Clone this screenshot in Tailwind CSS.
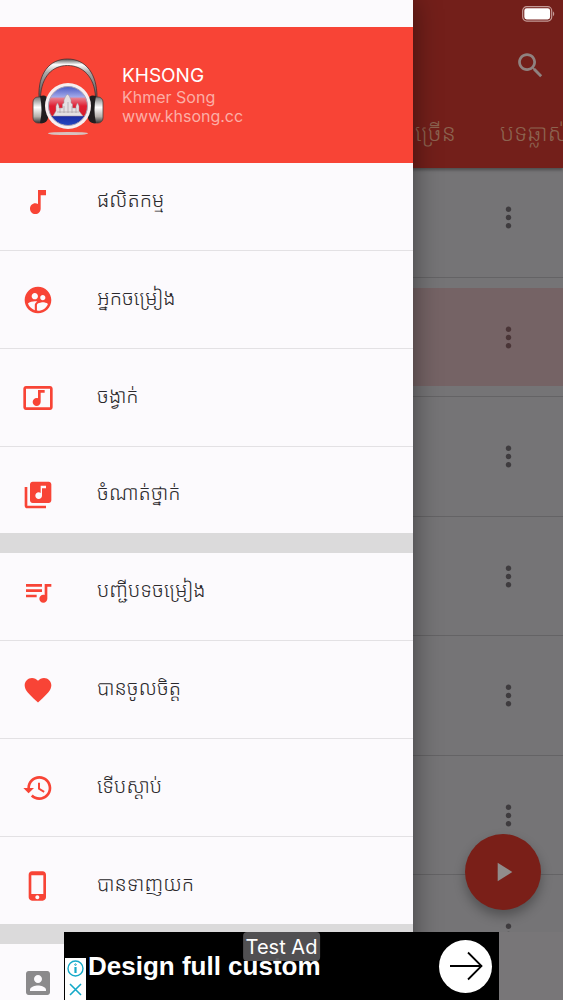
<!DOCTYPE html>
<html lang="km">
<head>
<meta charset="utf-8">
<meta name="viewport" content="width=device-width, initial-scale=1">
<title>KHSONG</title>
<script src="https://cdn.jsdelivr.net/npm/@tailwindcss/browser@4"></script>
</head>
<body class="font-['Inter','Noto_Sans_Khmer','Noto_Sans',sans-serif]">
<div class="relative h-screen overflow-hidden bg-[#757476]">

  <!-- Song list screen, dimmed by the open drawer -->
  <main class="flex h-full flex-col">
    <header class="flex h-[168px] shrink-0 flex-col bg-[#731f1a] shadow-[0_2px_3px_rgba(0,0,0,0.35)]">
      <div class="flex h-7 items-center justify-end pr-2">
        <svg class="h-4 w-[33px]" viewBox="0 0 33 16" aria-label="Battery full">
          <rect x="0.7" y="0.7" width="29" height="14.4" rx="4" fill="none" stroke="#c49a97" stroke-width="1.2"/>
          <rect x="2.3" y="2.3" width="25.8" height="11.2" rx="2.4" fill="#fff"/>
          <path d="M31 5.6c1.6.6 1.6 4 0 4.6z" fill="#c49a97"/>
        </svg>
      </div>
      <div class="flex h-[74px] items-center justify-end pr-4">
        <button aria-label="Search" class="text-[#8f8280]">
          <svg class="size-[33px]" viewBox="0 0 24 24" fill="currentColor"><path d="M15.5 14h-.79l-.28-.27C15.41 12.59 16 11.11 16 9.5 16 5.91 13.09 3 9.5 3S3 5.91 3 9.5 5.91 16 9.5 16c1.61 0 3.09-.59 4.23-1.57l.27.28v.79l5 4.99L20.49 19l-4.99-5zm-6 0C7.01 14 5 11.99 5 9.5S7.01 5 9.5 5 14 7.01 14 9.5 11.99 14 9.5 14z"/></svg>
        </button>
      </div>
      <nav class="flex flex-1 items-center gap-11 overflow-hidden pb-1 pl-[415px] text-[23px] leading-8 font-light whitespace-nowrap text-[#8c6350]">
        <a href="#" class="shrink-0">ច្រើន</a>
        <a href="#" class="shrink-0">បទឆ្លាស់</a>
      </nav>
    </header>

    <ul class="flex-1 overflow-hidden text-[#3f3c3f]">
      <li class="flex h-[98px] items-center justify-end pr-[38px]"><button aria-label="More"><svg class="size-[33px]" viewBox="0 0 24 24" fill="currentColor"><path d="M12 8c1.1 0 2-.9 2-2s-.9-2-2-2-2 .9-2 2 .9 2 2 2zm0 2c-1.1 0-2 .9-2 2s.9 2 2 2 2-.9 2-2-.9-2-2-2zm0 6c-1.1 0-2 .9-2 2s.9 2 2 2 2-.9 2-2-.9-2-2-2z"/></svg></button></li>
      <li class="flex h-[22px] items-center" role="separator"><span class="h-px flex-1 bg-[#646365]"></span></li>
      <li class="flex h-[98px] items-center justify-end bg-[#756365] pr-[38px] text-[#4a3537]"><button aria-label="More"><svg class="size-[33px]" viewBox="0 0 24 24" fill="currentColor"><path d="M12 8c1.1 0 2-.9 2-2s-.9-2-2-2-2 .9-2 2 .9 2 2 2zm0 2c-1.1 0-2 .9-2 2s.9 2 2 2 2-.9 2-2-.9-2-2-2zm0 6c-1.1 0-2 .9-2 2s.9 2 2 2 2-.9 2-2-.9-2-2-2z"/></svg></button></li>
      <li class="flex h-[21px] items-center" role="separator"><span class="h-px flex-1 bg-[#646365]"></span></li>
      <li class="flex h-[98px] items-center justify-end pr-[38px]"><button aria-label="More"><svg class="size-[33px]" viewBox="0 0 24 24" fill="currentColor"><path d="M12 8c1.1 0 2-.9 2-2s-.9-2-2-2-2 .9-2 2 .9 2 2 2zm0 2c-1.1 0-2 .9-2 2s.9 2 2 2 2-.9 2-2-.9-2-2-2zm0 6c-1.1 0-2 .9-2 2s.9 2 2 2 2-.9 2-2-.9-2-2-2z"/></svg></button></li>
      <li class="flex h-[22px] items-center" role="separator"><span class="h-px flex-1 bg-[#646365]"></span></li>
      <li class="flex h-[98px] items-center justify-end pr-[38px]"><button aria-label="More"><svg class="size-[33px]" viewBox="0 0 24 24" fill="currentColor"><path d="M12 8c1.1 0 2-.9 2-2s-.9-2-2-2-2 .9-2 2 .9 2 2 2zm0 2c-1.1 0-2 .9-2 2s.9 2 2 2 2-.9 2-2-.9-2-2-2zm0 6c-1.1 0-2 .9-2 2s.9 2 2 2 2-.9 2-2-.9-2-2-2z"/></svg></button></li>
      <li class="flex h-[21px] items-center" role="separator"><span class="h-px flex-1 bg-[#646365]"></span></li>
      <li class="flex h-[98px] items-center justify-end pr-[38px]"><button aria-label="More"><svg class="size-[33px]" viewBox="0 0 24 24" fill="currentColor"><path d="M12 8c1.1 0 2-.9 2-2s-.9-2-2-2-2 .9-2 2 .9 2 2 2zm0 2c-1.1 0-2 .9-2 2s.9 2 2 2 2-.9 2-2-.9-2-2-2zm0 6c-1.1 0-2 .9-2 2s.9 2 2 2 2-.9 2-2-.9-2-2-2z"/></svg></button></li>
      <li class="flex h-[22px] items-center" role="separator"><span class="h-px flex-1 bg-[#646365]"></span></li>
      <li class="flex h-[98px] items-center justify-end pr-[38px]"><button aria-label="More"><svg class="size-[33px]" viewBox="0 0 24 24" fill="currentColor"><path d="M12 8c1.1 0 2-.9 2-2s-.9-2-2-2-2 .9-2 2 .9 2 2 2zm0 2c-1.1 0-2 .9-2 2s.9 2 2 2 2-.9 2-2-.9-2-2-2zm0 6c-1.1 0-2 .9-2 2s.9 2 2 2 2-.9 2-2-.9-2-2-2z"/></svg></button></li>
      <li class="flex h-[21px] items-center" role="separator"><span class="h-px flex-1 bg-[#646365]"></span></li>
      <li class="flex h-[98px] items-center justify-end pr-[38px]"><button aria-label="More"><svg class="size-[33px]" viewBox="0 0 24 24" fill="currentColor"><path d="M12 8c1.1 0 2-.9 2-2s-.9-2-2-2-2 .9-2 2 .9 2 2 2zm0 2c-1.1 0-2 .9-2 2s.9 2 2 2 2-.9 2-2-.9-2-2-2zm0 6c-1.1 0-2 .9-2 2s.9 2 2 2 2-.9 2-2-.9-2-2-2z"/></svg></button></li>
    </ul>
    <div class="h-[68px] shrink-0 bg-[#787678]"></div>
  </main>

  <button aria-label="Play" class="absolute right-[22px] bottom-[90px] flex size-[76px] items-center justify-center rounded-full bg-[#7a1f18] text-[#918c8b] shadow-[0_6px_12px_rgba(0,0,0,0.3)]">
    <svg class="size-8" viewBox="0 0 24 24" fill="currentColor"><path d="M8 5v14l11-7z"/></svg>
  </button>

  <!-- Navigation drawer -->
  <aside class="absolute inset-y-0 left-0 w-[413px] max-w-[85%] overflow-hidden bg-[#fcfafd] pt-[27px] shadow-[0_0_26px_rgba(0,0,0,0.45)]">
    <div class="flex h-[136px] items-center gap-[18px] bg-[#f84436] pl-[30px]">
      <svg class="mt-1 h-20 w-[74px] shrink-0" viewBox="0 0 74 80" aria-label="KHSONG logo">
        <defs>
          <linearGradient id="band" x1="0" y1="0" x2="0" y2="1"><stop offset="0" stop-color="#555"/><stop offset=".15" stop-color="#fff"/><stop offset=".35" stop-color="#aaa"/><stop offset="1" stop-color="#555"/></linearGradient>
          <linearGradient id="cup" x1="0" y1="0" x2="0" y2="1"><stop offset="0" stop-color="#777"/><stop offset=".4" stop-color="#fff"/><stop offset=".75" stop-color="#b5b0ac"/><stop offset="1" stop-color="#333"/></linearGradient>
          <linearGradient id="flag" x1="0" y1="0" x2="0" y2="1"><stop offset="0" stop-color="#4a58c4"/><stop offset=".27" stop-color="#a3aaea"/><stop offset=".3" stop-color="#e8808f"/><stop offset=".5" stop-color="#e01d32"/><stop offset=".75" stop-color="#d51c2c"/><stop offset=".77" stop-color="#1b2ea6"/><stop offset="1" stop-color="#2447c0"/></linearGradient>
        </defs>
        <ellipse cx="38" cy="76.500" rx="20" ry="1.600" fill="#d8c2bf"/>
        <path d="M9 40C8 17 19 2 37.500 2S67 17 67 40h-1.500C64.500 20 53 8.500 37.500 8.500S11.500 20 10.500 40z" fill="url(#band)" stroke="#4a2f2e" stroke-width=".8"/>
        <rect x="3" y="40" width="13" height="26" rx="5" fill="url(#cup)" stroke="#4b3f3c" stroke-width=".8"/>
        <path d="M10 39q7-2 8 4v18q-1 6-8 5 3-13 0-27z" fill="#211d1f"/>
        <rect x="60" y="40" width="13" height="26" rx="5" fill="url(#cup)" stroke="#4b3f3c" stroke-width=".8"/>
        <path d="M66 39q-7-2-8 4v18q1 6 8 5-3-13 0-27z" fill="#211d1f"/>
        <circle cx="38" cy="49" r="23" fill="#f7eef0"/>
        <circle cx="38" cy="49" r="19.500" fill="url(#flag)" stroke="#a8a0b4" stroke-width="1"/>
        <path d="M23 59l3-5v-5l1.500-3 1.500 3v2h3.500v-4l1.500-1v-3l2-4.500 1.500-1 1.500 1 2 4.500v3l1.500 1v4H46v-2l1.500-3 1.500 3v5l4 5z" fill="#e4e0e3" stroke="#a0949b" stroke-width=".5"/>
        <path d="M27 55h22M30 51v5M34 49v7M38 45v11M42 49v7M46 51v5" stroke="#a0949b" stroke-width=".6" fill="none"/>
      </svg>
      <div class="text-base leading-[19px] text-[#fcaea6]">
        <h1 class="text-[19px] leading-6 text-white">KHSONG</h1>
        <p>Khmer Song</p>
        <p>www.khsong.cc</p>
      </div>
    </div>

    <nav class="text-[20px] leading-8 font-light text-[#2b292c]">
      <a href="#" class="flex h-[77px] items-center gap-[43px] pl-[22px]"><svg class="size-[32px] text-[#f84436]" viewBox="0 0 24 24" fill="currentColor"><path d="M12 3v10.550c-.59-.34-1.270-.55-2-.55-2.210 0-4 1.790-4 4s1.790 4 4 4 4-1.790 4-4V7h4V3h-6z"/></svg><span class="pb-1">ផលិតកម្ម</span></a>
      <div class="flex h-[21px] items-center"><hr class="flex-1 border-[#e3e1e4]"></div>
      <a href="#" class="flex h-[77px] items-center gap-[43px] pl-[22px]"><svg class="size-[32px] text-[#f84436]" viewBox="0 0 24 24" fill="currentColor"><path d="M11.990 2c-5.520 0-10 4.480-10 10s4.480 10 10 10 10-4.480 10-10-4.480-10-10-10zm3.610 6.340c1.070 0 1.930.86 1.930 1.930 0 1.070-.86 1.930-1.930 1.930-1.070 0-1.930-.86-1.930-1.930-.01-1.070.86-1.930 1.930-1.930zm-6-1.580c1.300 0 2.360 1.060 2.360 2.360 0 1.300-1.060 2.360-2.360 2.360s-2.360-1.060-2.360-2.360c0-1.310 1.050-2.360 2.360-2.360zm0 9.130v3.750c-2.400-.75-4.300-2.600-5.140-4.960 1.050-1.120 3.670-1.690 5.140-1.690.53 0 1.200.08 1.900.22-1.640.87-1.900 2.020-1.900 2.680zM11.990 20c-.27 0-.53-.01-.79-.04v-4.070c0-1.420 2.940-2.130 4.400-2.130 1.070 0 2.920.39 3.840 1.150-1.170 2.970-4.060 5.090-7.450 5.090z"/></svg><span class="pb-1">អ្នកចម្រៀង</span></a>
      <div class="flex h-[21px] items-center"><hr class="flex-1 border-[#e3e1e4]"></div>
      <a href="#" class="flex h-[77px] items-center gap-[43px] pl-[22px]"><svg class="size-[32px] text-[#f84436]" viewBox="0 0 24 24" fill="currentColor"><path d="M21 3H3c-1.100 0-2 .9-2 2v14c0 1.100.9 2 2 2h18c1.100 0 2-.9 2-2V5c0-1.100-.9-2-2-2zm0 16H3V5h18v14zM8 15c0-1.660 1.340-3 3-3 .35 0 .69.07 1 .18V6h5v2h-3v7.030c-.02 1.640-1.350 2.970-3 2.970-1.660 0-3-1.340-3-3z"/></svg><span class="pb-1">ចង្វាក់</span></a>
      <div class="flex h-[21px] items-center"><hr class="flex-1 border-[#e3e1e4]"></div>
      <a href="#" class="flex h-[76px] items-center gap-[43px] pl-[22px]"><svg class="size-[32px] text-[#f84436]" viewBox="0 0 24 24" fill="currentColor"><path d="M20 2H8c-1.100 0-2 .9-2 2v12c0 1.100.9 2 2 2h12c1.100 0 2-.9 2-2V4c0-1.100-.9-2-2-2zm-2 5h-3v5.500c0 1.380-1.120 2.500-2.500 2.500S10 13.880 10 12.500s1.120-2.500 2.500-2.500c.57 0 1.080.19 1.500.51V5h4v2zM4 6H2v14c0 1.100.9 2 2 2h14v-2H4V6z"/></svg><span class="pb-1">ចំណាត់ថ្នាក់</span></a>
      <div class="h-5 bg-[#dbdadb]"></div>
      <a href="#" class="flex h-[77px] items-center gap-[43px] pl-[22px]"><svg class="size-[32px] text-[#f84436]" viewBox="0 0 24 24" fill="currentColor"><path d="M15 6H3v2h12V6zm0 4H3v2h12v-2zM3 16h8v-2H3v2zM17 6v8.180c-.31-.11-.65-.18-1-.18-1.660 0-3 1.340-3 3s1.340 3 3 3 3-1.340 3-3V8h3V6h-5z"/></svg><span class="pb-1">បញ្ជីបទចម្រៀង</span></a>
      <div class="flex h-[21px] items-center"><hr class="flex-1 border-[#e3e1e4]"></div>
      <a href="#" class="flex h-[77px] items-center gap-[43px] pl-[22px]"><svg class="size-[32px] text-[#f84436]" viewBox="0 0 24 24" fill="currentColor"><path d="M12 21.350l-1.450-1.320C5.400 15.360 2 12.280 2 8.500 2 5.420 4.420 3 7.500 3c1.740 0 3.410.81 4.500 2.090C13.090 3.810 14.760 3 16.500 3 19.580 3 22 5.420 22 8.500c0 3.780-3.400 6.860-8.550 11.540L12 21.350z"/></svg><span class="pb-1">បានចូលចិត្ត</span></a>
      <div class="flex h-[21px] items-center"><hr class="flex-1 border-[#e3e1e4]"></div>
      <a href="#" class="flex h-[77px] items-center gap-[43px] pl-[22px]"><svg class="size-[32px] text-[#f84436]" viewBox="0 0 24 24" fill="currentColor"><path d="M13 3c-4.970 0-9 4.030-9 9H1l3.890 3.890.07.14L9 12H6c0-3.870 3.130-7 7-7s7 3.130 7 7-3.130 7-7 7c-1.930 0-3.680-.79-4.940-2.060l-1.420 1.420C8.270 19.990 10.510 21 13 21c4.970 0 9-4.030 9-9s-4.030-9-9-9zm-1 5v5l4.280 2.540.72-1.210-3.500-2.080V8H12z"/></svg><span class="pb-1">ទើបស្ដាប់</span></a>
      <div class="flex h-[21px] items-center"><hr class="flex-1 border-[#e3e1e4]"></div>
      <a href="#" class="flex h-[77px] items-center gap-[43px] pl-[22px]"><svg class="size-[32px] text-[#f84436]" viewBox="0 0 24 24" fill="currentColor"><path d="M15.500 1h-8C6.120 1 5 2.120 5 3.500v17C5 21.880 6.120 23 7.500 23h8c1.380 0 2.500-1.120 2.500-2.500v-17C18 2.120 16.880 1 15.500 1zm-4 21c-.83 0-1.500-.67-1.500-1.500s.67-1.500 1.500-1.500 1.500.67 1.500 1.500-.67 1.500-1.500 1.500zm4.500-4H7V4h9v14z"/></svg><span class="pb-1">បានទាញយក</span></a>
      <div class="h-5 bg-[#dbdadb]"></div>
      <a href="#" aria-label="Account" class="flex h-[77px] items-center pl-[22px]"><svg class="size-[32px] text-[#8b8a8c]" viewBox="0 0 24 24" fill="currentColor"><path d="M3 5v14c0 1.100.89 2 2 2h14c1.100 0 2-.9 2-2V5c0-1.100-.9-2-2-2H5c-1.110 0-2 .9-2 2zm12 4c0 1.660-1.340 3-3 3s-3-1.340-3-3 1.340-3 3-3 3 1.340 3 3zm-9 8c0-2 4-3.100 6-3.100s6 1.100 6 3.100v1H6v-1z"/></svg></a>
    </nav>
  </aside>

  <!-- Banner advertisement -->
  <div class="absolute inset-x-0 bottom-0 flex justify-center">
    <section class="relative flex h-[68px] w-[435px] max-w-full items-center bg-black pr-[7px] pl-px" aria-label="Advertisement">
      <div class="flex w-[21px] flex-col items-center gap-1 self-end bg-white py-[2px] text-[#14a9c8]">
        <button aria-label="Ad information"><svg class="block size-[17px]" viewBox="0 0 17 17" fill="none" stroke="currentColor"><circle cx="8.500" cy="8.500" r="7.500" stroke-width="1.400"/><path d="M8.500 7v6" stroke-width="2.200"/><circle cx="8.500" cy="4.600" r=".8"/></svg></button>
        <button aria-label="Close ad"><svg class="block size-[17px]" viewBox="0 0 17 17" fill="none" stroke="currentColor" stroke-width="1.600"><path d="M3 3l11 11M14 3L3 14"/></svg></button>
      </div>
      <p class="flex-1 pl-[2px] font-['Liberation_Sans',sans-serif] text-[26px] leading-8 font-bold whitespace-nowrap text-white">Design full custom</p>
      <button aria-label="Open ad" class="flex size-[53px] items-center justify-center rounded-full bg-white text-black">
        <svg class="size-9" viewBox="0 0 36 36" fill="none" stroke="currentColor" stroke-width="1.800"><path d="M2 18h31M20 4.500L33.500 18 20 31.500"/></svg>
      </button>
      <span class="absolute top-0 left-1/2 flex h-[29px] -translate-x-1/2 items-center rounded bg-[#555456]/95 px-[3px] text-[20px] leading-6 whitespace-nowrap text-white">Test Ad</span>
    </section>
  </div>
</div>
</body>
</html>
